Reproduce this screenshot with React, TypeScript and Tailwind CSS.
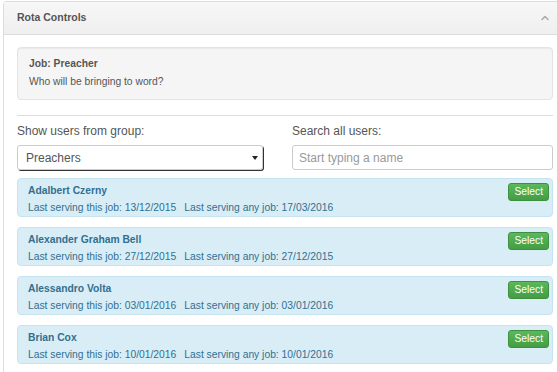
import { ChevronUp } from "lucide-react";

const USERS = [
  { name: "Adalbert Czerny", job: "13/12/2015", any: "17/03/2016" },
  { name: "Alexander Graham Bell", job: "27/12/2015", any: "27/12/2015" },
  { name: "Alessandro Volta", job: "03/01/2016", any: "03/01/2016" },
  { name: "Brian Cox", job: "10/01/2016", any: "10/01/2016" },
];

export default function App()
{
  return (
    <div className="h-[372px] overflow-hidden bg-white pl-[3px] pt-[1px] font-['Liberation_Sans',Arial,sans-serif] text-[#333]">
      <div className="w-[560px] h-[380px] border border-[#ddd] rounded-tl-[3px] bg-white">
        <div className="h-[33px] flex items-center justify-between pl-[13px] pr-[8px] bg-gradient-to-b from-[#f7f7f7] to-[#efefef] border-b border-[#ddd]">
          <span className="text-[10.5px] font-bold text-[#555]">Rota Controls</span>
          <ChevronUp className="w-[12px] h-[12px] text-[#aaa] mr-[3px]" strokeWidth={3} />
        </div>
        <div className="pl-[13px] pr-[8px] pt-[12px]">
          <div className="w-[536px] h-[53px] bg-[#f5f5f5] border border-[#e3e3e3] rounded-[4px] px-[11px] pt-[8px] text-[10.3px] text-[#555] shadow-[inset_0_1px_1px_rgba(0,0,0,0.05)]">
            <div className="font-bold leading-[16px]">Job: Preacher</div>
            <div className="leading-[18px] mt-[1px]">Who will be bringing to word?</div>
          </div>
          <div className="w-[536px] border-t border-[#ddd] mt-[15px]" />
          <div className="w-[536px] flex gap-[29px] mt-[8px]">
            <div className="w-[246px]">
              <div className="text-[12px] leading-[15px] text-[#555]">Show users from group:</div>
              <div className="mt-[6px] h-[25px] border border-[#ccc] rounded-[3px] flex items-center justify-between pl-[8px] pr-[2px] text-[12px] text-[#555] shadow-[1px_1px_0_#333]">
                <span>Preachers</span>
                <svg width="6" height="4" viewBox="0 0 6 4" className="mr-[2px]"><path d="M0 0H6L3 4Z" fill="#222" /></svg>
              </div>
            </div>
            <div className="flex-1">
              <div className="text-[12px] leading-[15px] text-[#555]">Search all users:</div>
              <div className="mt-[6px] h-[25px] border border-[#ccc] rounded-[3px] flex items-center pl-[6px] text-[12px] text-[#999]">
                Start typing a name
              </div>
            </div>
          </div>
          <div className="w-[536px] flex flex-col gap-[10px] mt-[8px]">
            {USERS.map((u) => (
              <div key={u.name} className="h-[39px] bg-[#d9edf7] border border-[#c6e4f0] rounded-[4px] flex justify-between pl-[10px] pr-[3px] text-[#31708f]">
                <div className="text-[10.3px]">
                  <div className="font-bold leading-[14px] mt-[5px]">{u.name}</div>
                  <div className="leading-[14px] mt-[3px]">
                    Last serving this job: {u.job}
                    <span className="ml-[8px]">Last serving any job: {u.any}</span>
                  </div>
                </div>
                <button className="mt-[4px] h-[18px] px-[5px] rounded-[3px] bg-gradient-to-b from-[#5cb85c] to-[#449d44] border border-[#3e8f3e] text-white text-[10.3px] leading-[14px]">
                  Select
                </button>
              </div>
            ))}
          </div>
        </div>
      </div>
    </div>
  );
}
